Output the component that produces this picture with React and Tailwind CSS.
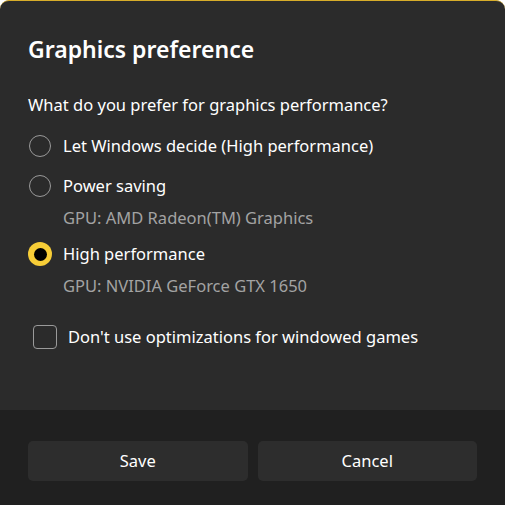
import React, { useState } from 'react';

const options = [
  { id: 'auto', label: 'Let Windows decide (High performance)' },
  { id: 'power', label: 'Power saving', gpu: 'GPU: AMD Radeon(TM) Graphics' },
  { id: 'high', label: 'High performance', gpu: 'GPU: NVIDIA GeForce GTX 1650' },
];

function Radio({ checked }) {
  return (
    <span className="flex h-6 w-6 shrink-0 items-center justify-center">
      {checked ? (
        <span className="flex h-6 w-6 items-center justify-center rounded-full bg-[#f7cd37]">
          <span className="h-[13px] w-[13px] rounded-full bg-black" />
        </span>
      ) : (
        <span className="h-[22px] w-[22px] rounded-full border-[1.5px] border-[#9a9a9a]" />
      )}
    </span>
  );
}

export default function App() {
  const [choice, setChoice] = useState('high');
  const [noOpt, setNoOpt] = useState(false);

  return (
    <div
      className="flex h-[505px] w-[505px] flex-col overflow-hidden rounded-t-[9px] border-t border-[#d8ad2a] bg-[#2b2b2b] text-white"
      style={{ fontFamily: '"Noto Sans", "Open Sans", sans-serif' }}
    >
      {/* Content */}
      <div className="flex flex-1 flex-col px-7 pt-[31px]">
        <h1 className="text-[23px] font-semibold leading-[34px]">Graphics preference</h1>

        <p className="mt-[27px] text-[16.5px] leading-[24px]">What do you prefer for graphics performance?</p>

        <div className="mt-[9px] flex flex-col">
          {options.map((o) => (
            <div key={o.id} className="flex flex-col">
              <button
                type="button"
                onClick={() => setChoice(o.id)}
                className="flex h-10 items-center gap-[11px] text-left"
              >
                <Radio checked={choice === o.id} />
                <span className="text-[16.5px]">{o.label}</span>
              </button>
              {o.gpu && (
                <div className="mb-[4px] pl-[35px] text-[16.5px] leading-[24px] text-[#a3a3a3]">{o.gpu}</div>
              )}
            </div>
          ))}
        </div>

        <button
          type="button"
          onClick={() => setNoOpt(!noOpt)}
          className="mt-[23px] flex items-center gap-[11px] pl-[5px] text-left"
        >
          <span className="h-6 w-6 shrink-0 rounded-[4px] border-[1.5px] border-[#9a9a9a]" />
          <span className="text-[16.5px]">Don't use optimizations for windowed games</span>
        </button>
      </div>

      {/* Footer */}
      <div className="flex h-[95px] gap-[10px] bg-[#202020] px-7 pt-[31px]">
        <button type="button" className="h-10 flex-1 rounded-[5px] bg-[#2d2d2d] text-[16.5px]">
          Save
        </button>
        <button type="button" className="h-10 flex-1 rounded-[5px] bg-[#2d2d2d] text-[16.5px]">
          Cancel
        </button>
      </div>
    </div>
  );
}
